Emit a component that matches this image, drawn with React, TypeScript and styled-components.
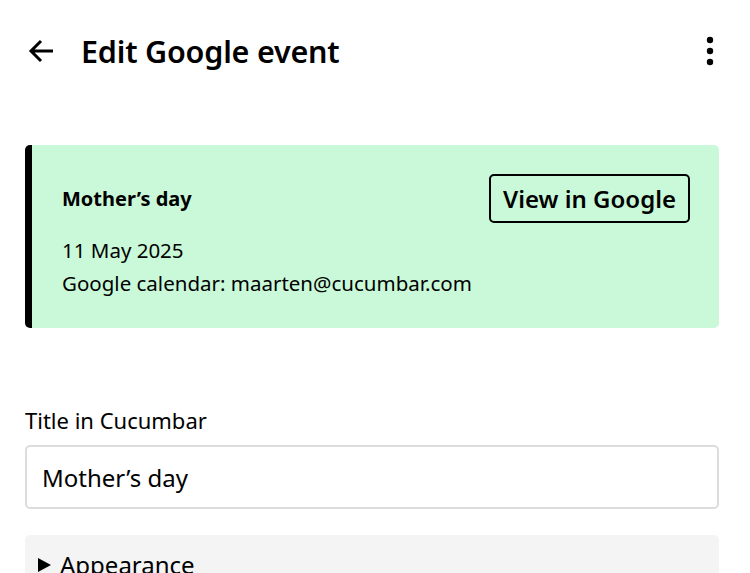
import styled, { createGlobalStyle } from 'styled-components'

const GlobalStyle = createGlobalStyle`
  * {
    box-sizing: border-box;
  }

  body {
    margin: 0;
    background: #ffffff;
    color: #000000;
    font-family: 'Noto Sans', 'Liberation Sans', sans-serif;
  }
`

const Page = styled.div`
  padding: 0 31px 0 25px;
`

// Top bar with back arrow, heading and overflow menu
const Header = styled.header`
  display: flex;
  align-items: center;
  height: 58px;
  margin-top: 22px;
`

const IconButton = styled.button`
  display: flex;
  align-items: center;
  justify-content: center;
  padding: 0;
  border: none;
  background: none;
  color: #000;
  cursor: pointer;
`

const BackButton = styled(IconButton)`
  width: 28px;
  margin-left: 2px;
`

const MoreButton = styled(IconButton)`
  width: 18px;
  margin-left: auto;
`

const Heading = styled.h1`
  margin: 0 0 0 26px;
  font-size: 30.5px;
  font-weight: 600;
  line-height: 1;
  letter-spacing: -0.2px;
`

// Linked Google event summary
const EventCard = styled.section`
  margin-top: 65px;
  padding: 29px 29px 28px 30px;
  background: #c9f9d8;
  border-left: 7px solid #000;
  border-radius: 5px;
`

const CardTop = styled.div`
  display: flex;
  align-items: center;
  justify-content: space-between;
  height: 48px;
`

const EventTitle = styled.h2`
  margin: 0;
  font-size: 20px;
  font-weight: 700;
`

const OutlineButton = styled.button`
  height: 49px;
  padding: 0 12px;
  border: 2px solid #000;
  border-radius: 5px;
  background: transparent;
  color: #000;
  font-family: inherit;
  font-size: 24px;
  font-weight: 600;
  cursor: pointer;
`

const Details = styled.div`
  margin-top: 12px;
`

const DetailLine = styled.p`
  margin: 0;
  font-size: 20.5px;
  line-height: 33px;
`

// Form fields
const Field = styled.label`
  display: flex;
  flex-direction: column;
  gap: 9px;
  margin-top: 77px;
`

const FieldLabel = styled.span`
  font-size: 22px;
  line-height: 31px;
`

const TextInput = styled.input`
  width: 100%;
  height: 64px;
  padding: 0 15px;
  border: 2px solid #dcdcdc;
  border-radius: 5px;
  font-family: inherit;
  font-size: 24px;
  color: #000;
  outline: none;
`

const Section = styled.div`
  margin-top: 26px;
  padding: 15px 13px;
  background: #f4f4f4;
  border-radius: 5px;
`

const SectionToggle = styled.div`
  display: flex;
  align-items: center;
  gap: 9px;
  font-size: 24px;
  line-height: 30px;
  cursor: pointer;
`

const ArrowLeftIcon = () => (
  <svg width="26" height="24" viewBox="0 0 26 24" fill="none">
    <path
      d="M25 12H3M13 2L3 12l10 10"
      stroke="currentColor"
      strokeWidth="3"
      strokeLinejoin="miter"
    />
  </svg>
)

const MoreIcon = () => (
  <svg width="8" height="30" viewBox="0 0 8 30" fill="currentColor">
    <circle cx="4" cy="4" r="3.2" />
    <circle cx="4" cy="15" r="3.2" />
    <circle cx="4" cy="26" r="3.2" />
  </svg>
)

const TriangleIcon = () => (
  <svg width="13" height="14" viewBox="0 0 13 14" fill="currentColor">
    <path d="M0 0L13 7L0 14Z" />
  </svg>
)

export default function App() {
  return (
    <>
      <GlobalStyle />
      <Page>
        <Header>
          <BackButton aria-label="Back">
            <ArrowLeftIcon />
          </BackButton>
          <Heading>Edit Google event</Heading>
          <MoreButton aria-label="More">
            <MoreIcon />
          </MoreButton>
        </Header>

        <EventCard>
          <CardTop>
            <EventTitle>Mother’s day</EventTitle>
            <OutlineButton>View in Google</OutlineButton>
          </CardTop>
          <Details>
            <DetailLine>11 May 2025</DetailLine>
            <DetailLine>Google calendar: maarten@cucumbar.com</DetailLine>
          </Details>
        </EventCard>

        <Field>
          <FieldLabel>Title in Cucumbar</FieldLabel>
          <TextInput defaultValue="Mother’s day" />
        </Field>

        <Section>
          <SectionToggle>
            <TriangleIcon />
            Appearance
          </SectionToggle>
        </Section>
      </Page>
    </>
  )
}
